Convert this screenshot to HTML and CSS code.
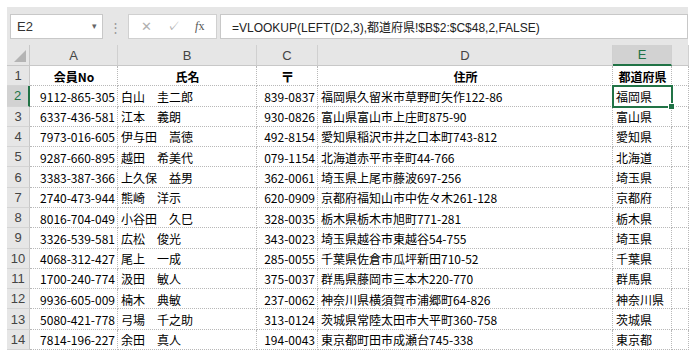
FILE: index.html
```html
<!DOCTYPE html>
<html lang="ja">
<head>
  <meta charset="UTF-8">
  <title>会員一覧</title>
  <link rel="stylesheet" href="styles.css">
</head>
<body>
  <div class="excel">
    <div class="toolbar">
      <div class="namebox"><span>E2</span><span class="arrow">▾</span></div>
      <div class="grip">⋮</div>
      <div class="fxbox">
        <span class="ico">✕</span>
        <span class="ico">✓</span>
        <span class="ico fx"><i>f</i>x</span>
      </div>
      <div class="formula">=VLOOKUP(LEFT(D2,3),都道府県!$B$2:$C$48,2,FALSE)</div>
    </div>
    <div class="sheet">
      <div class="corner"></div>
      <div class="ch">A</div><div class="ch">B</div><div class="ch">C</div><div class="ch">D</div><div class="ch sel">E</div><div class="ch"></div>

      <div class="rh">1</div><div class="c th">会員No</div><div class="c th">氏名</div><div class="c th post">〒</div><div class="c th">住所</div><div class="c th">都道府県</div><div class="c"></div>
      <div class="rh sel">2</div><div class="c r">9112-865-305</div><div class="c">白山　圭二郎</div><div class="c r">839-0837</div><div class="c">福岡県久留米市草野町矢作122-86</div><div class="c active">福岡県</div><div class="c"></div>
      <div class="rh">3</div><div class="c r">6337-436-581</div><div class="c">江本　義朗</div><div class="c r">930-0826</div><div class="c">富山県富山市上庄町875-90</div><div class="c">富山県</div><div class="c"></div>
      <div class="rh">4</div><div class="c r">7973-016-605</div><div class="c">伊与田　嵩徳</div><div class="c r">492-8154</div><div class="c">愛知県稲沢市井之口本町743-812</div><div class="c">愛知県</div><div class="c"></div>
      <div class="rh">5</div><div class="c r">9287-660-895</div><div class="c">越田　希美代</div><div class="c r">079-1154</div><div class="c">北海道赤平市幸町44-766</div><div class="c">北海道</div><div class="c"></div>
      <div class="rh">6</div><div class="c r">3383-387-366</div><div class="c">上久保　益男</div><div class="c r">362-0061</div><div class="c">埼玉県上尾市藤波697-256</div><div class="c">埼玉県</div><div class="c"></div>
      <div class="rh">7</div><div class="c r">2740-473-944</div><div class="c">熊崎　洋示</div><div class="c r">620-0909</div><div class="c">京都府福知山市中佐々木261-128</div><div class="c">京都府</div><div class="c"></div>
      <div class="rh">8</div><div class="c r">8016-704-049</div><div class="c">小谷田　久巳</div><div class="c r">328-0035</div><div class="c">栃木県栃木市旭町771-281</div><div class="c">栃木県</div><div class="c"></div>
      <div class="rh">9</div><div class="c r">3326-539-581</div><div class="c">広松　俊光</div><div class="c r">343-0023</div><div class="c">埼玉県越谷市東越谷54-755</div><div class="c">埼玉県</div><div class="c"></div>
      <div class="rh">10</div><div class="c r">4068-312-427</div><div class="c">尾上　一成</div><div class="c r">285-0055</div><div class="c">千葉県佐倉市瓜坪新田710-52</div><div class="c">千葉県</div><div class="c"></div>
      <div class="rh">11</div><div class="c r">1700-240-774</div><div class="c">汲田　敏人</div><div class="c r">375-0037</div><div class="c">群馬県藤岡市三本木220-770</div><div class="c">群馬県</div><div class="c"></div>
      <div class="rh">12</div><div class="c r">9936-605-009</div><div class="c">楠木　典敏</div><div class="c r">237-0062</div><div class="c">神奈川県横須賀市浦郷町64-826</div><div class="c">神奈川県</div><div class="c"></div>
      <div class="rh">13</div><div class="c r">5080-421-778</div><div class="c">弓場　千之助</div><div class="c r">313-0124</div><div class="c">茨城県常陸太田市大平町360-758</div><div class="c">茨城県</div><div class="c"></div>
      <div class="rh">14</div><div class="c r">7814-196-227</div><div class="c">余田　真人</div><div class="c r">194-0043</div><div class="c">東京都町田市成瀬台745-338</div><div class="c">東京都</div><div class="c"></div>
    </div>
  </div>
</body>
</html>
```

FILE: styles.css
```css
body { margin: 7px; background: #fff; font-family: "Noto Sans CJK JP", sans-serif; color: #000; }
.excel { width: 681px; background: #e6e6e6; }

.toolbar { height: 38px; display: flex; align-items: center; padding: 0 0 0 3px; gap: 0; }
.namebox { width: 93px; height: 25px; box-sizing: border-box; background: #fff; border: 1px solid #c8c8c8; display: flex; align-items: center; justify-content: space-between; padding: 0 5px 0 6px; font-family: "Liberation Sans", sans-serif; font-size: 13px; color: #333; }
.namebox .arrow { font-size: 9px; color: #666; }
.grip { width: 25px; text-align: center; color: #999; font-size: 13px; }
.fxbox { width: 89px; height: 25px; box-sizing: border-box; background: #fff; border: 1px solid #d0d0d0; display: flex; align-items: center; justify-content: space-around; padding: 0 4px; font-family: "Liberation Sans", sans-serif; font-size: 13px; color: #b0b0b0; }
.fxbox .fx { color: #555; font-size: 12px; font-family: "Liberation Serif", serif; }
.formula { flex: 1; height: 25px; box-sizing: border-box; margin-left: 3px; background: #fff; border: 1px solid #c8c8c8; display: flex; align-items: center; padding-left: 11px; font-family: "Liberation Sans", "Noto Sans CJK JP", sans-serif; font-size: 12px; color: #222; white-space: nowrap; overflow: hidden; }

.sheet { display: grid; grid-template-columns: 23px 88px 139px 61px 295px 59px 17px; grid-template-rows: 21px repeat(14, 1fr); height: 305px; }
.sheet > div { box-sizing: border-box; display: flex; align-items: center; white-space: nowrap; overflow: hidden; }

.corner { position: relative; border-right: 1px solid #c8c8c8; border-bottom: 1px solid #c8c8c8; }
.corner::after { content: ""; position: absolute; right: 3px; bottom: 3px; border-left: 12px solid transparent; border-bottom: 12px solid #b4b4b4; }
.ch { justify-content: center; font-family: "Liberation Sans", sans-serif; font-size: 13px; color: #444; border-right: 1px solid #d0d0d0; border-bottom: 1px solid #c8c8c8; }
.ch.sel { background: #d2d2d2; color: #217346; border-bottom: 2px solid #217346; }
.rh { justify-content: center; font-family: "Liberation Sans", sans-serif; font-size: 13px; color: #444; border-right: 1px solid #c8c8c8; border-bottom: 1px solid #d4d4d4; }
.rh.sel { background: #d2d2d2; color: #217346; border-right: 2px solid #217346; }

.c { background: #fff; font-size: 12px; padding: 1px 2px 0 3px; border-right: 1px dotted #b8b8b8; border-bottom: 1px dotted #b8b8b8; }
.c.r { justify-content: flex-end; }
.c.th { justify-content: center; font-weight: bold; }
.c.post { font-size: 14px; font-weight: 900; }
.c.active { position: relative; outline: 2px solid #217346; outline-offset: -1px; z-index: 1; overflow: visible; }
.c.active::after { content: ""; position: absolute; right: -4px; bottom: -4px; width: 5px; height: 5px; background: #217346; border: 1px solid #fff; }
```
